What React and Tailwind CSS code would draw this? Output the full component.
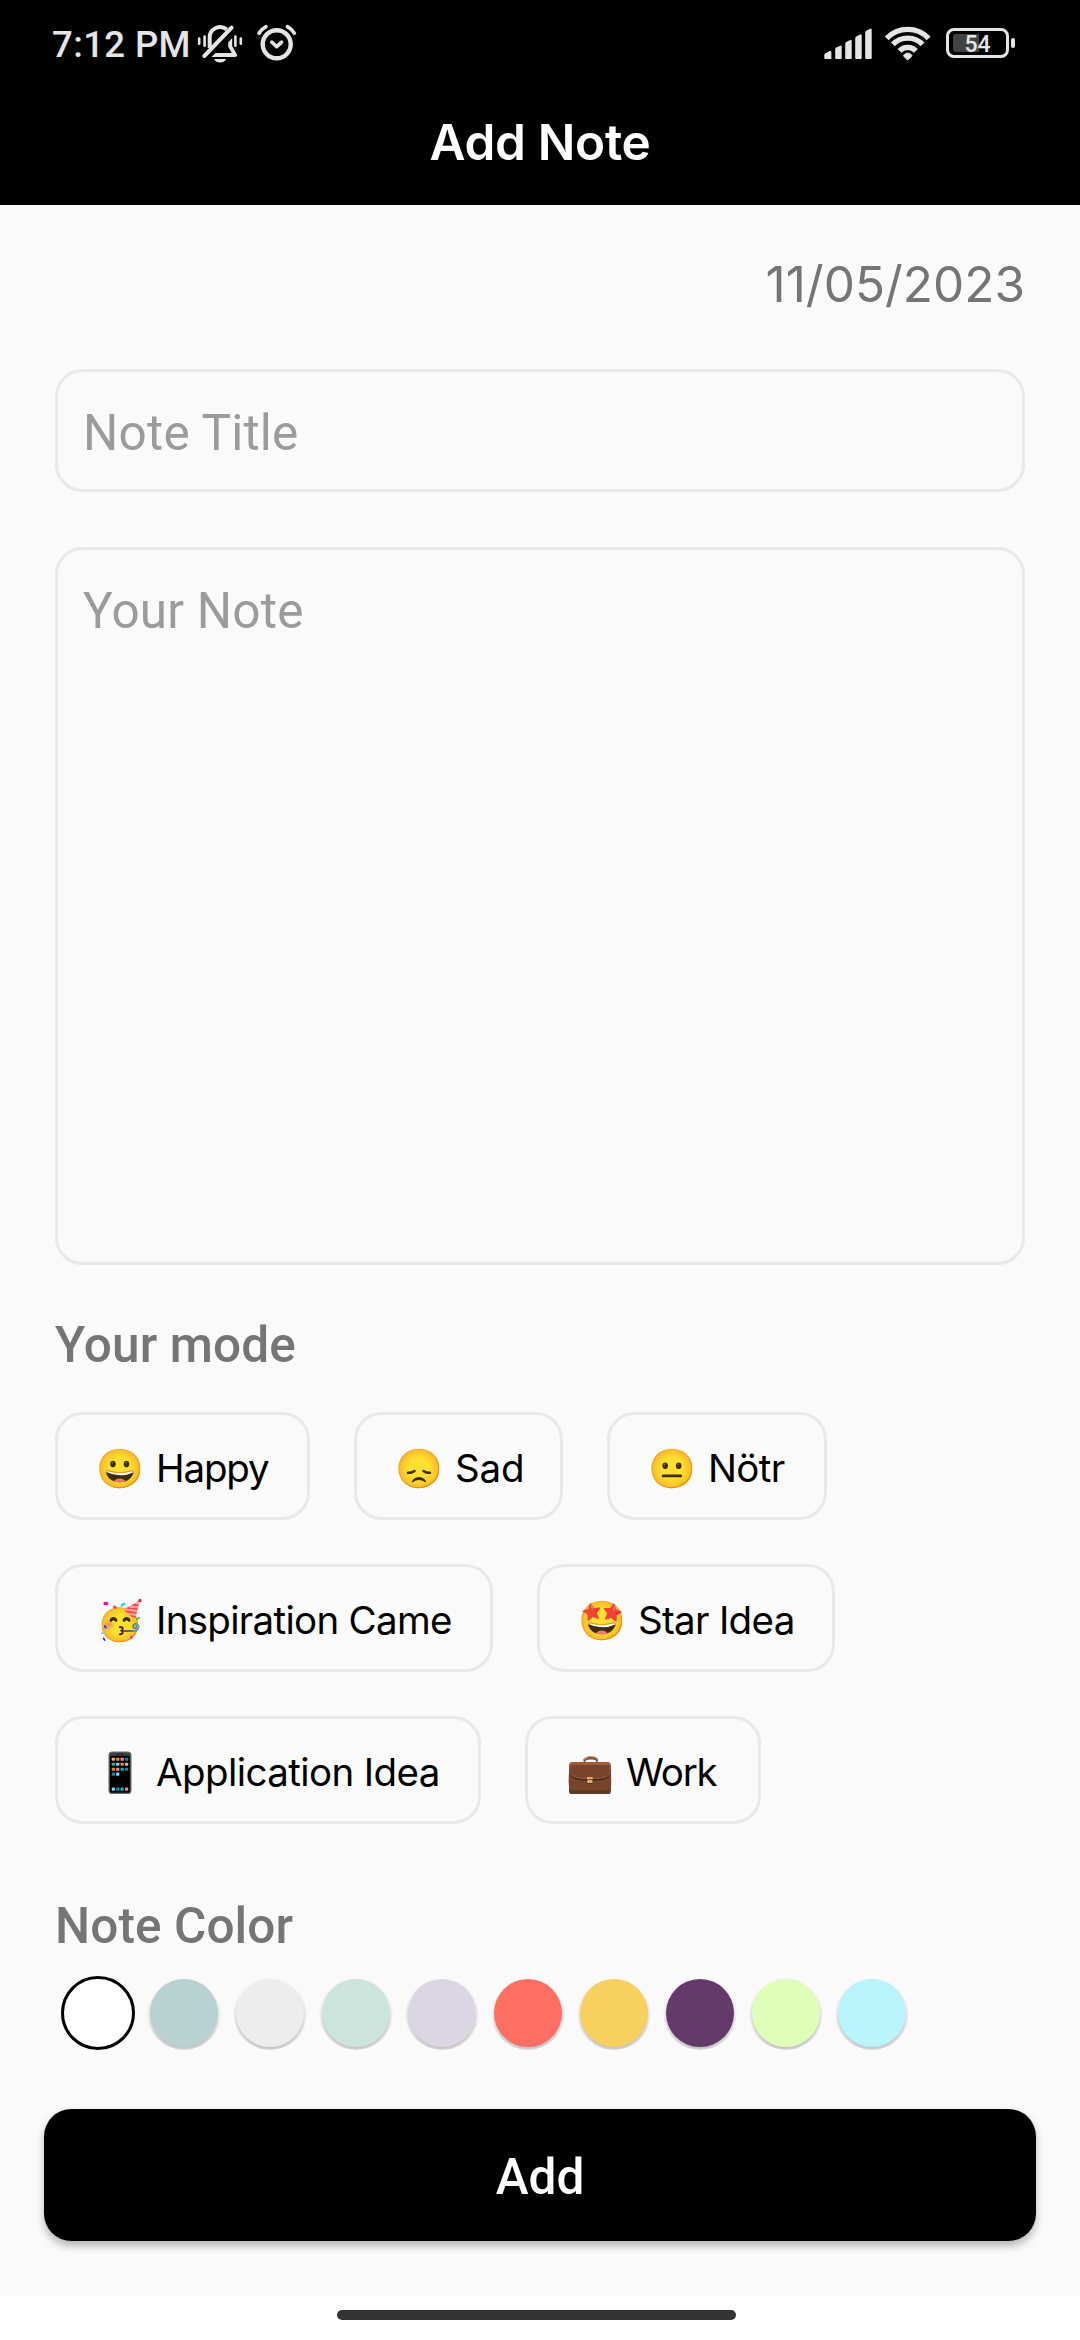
const moodRows = [
  [
    { emoji: "😀", label: "Happy", box: "w-[255px]", track: "tracking-[-1.17px]" },
    { emoji: "😞", label: "Sad", box: "w-[209px]", track: "tracking-[-0.14px]" },
    { emoji: "😐", label: "Nötr", box: "w-[220px]", track: "tracking-[-0.67px]" },
  ],
  [
    { emoji: "🥳", label: "Inspiration Came", box: "w-[438px]", track: "tracking-[-0.7px]" },
    { emoji: "🤩", label: "Star Idea", box: "w-[298px]", track: "tracking-[-0.69px]" },
  ],
  [
    { emoji: "📱", label: "Application Idea", box: "w-[426px]", track: "tracking-[-0.59px]" },
    { emoji: "💼", label: "Work", box: "w-[236px]", track: "tracking-[-1.2px]" },
  ],
];

const noteColors = [
  "bg-[#b8d2d2]",
  "bg-[#ededed]",
  "bg-[#cbe4dc]",
  "bg-[#dad7e2]",
  "bg-[#ff6e62]",
  "bg-[#f7d060]",
  "bg-[#643a6b]",
  "bg-[#dfffb9]",
  "bg-[#b9f3fc]",
];

function BellOffIcon() {
  return (
    <svg className="h-[88px] w-[48px]" viewBox="196 0 48 88" fill="none" stroke="#e5e5e5" strokeLinecap="round">
      <path d="M209.7 48V37.2a10.3 10.3 0 0 1 17-7.6" strokeWidth="4" strokeLinecap="butt" />
      <path d="M228.2 42.4L232.2 38V46.2L237 54.6Q237.6 57 235 57H211.5L215.5 53H231.8L228.2 46.8Z" fill="#e5e5e5" stroke="none" />
      <path d="M204.3 56L231.6 27.6" strokeWidth="4" />
      <path d="M214 59H226.2Q224.5 62.6 220.1 62.6T214 59Z" fill="#e5e5e5" stroke="none" />
      <path d="M199.2 38.6V43.8M204.6 36.6V45.8M235.4 36.6V45.8M240.8 38.6V43.8" strokeWidth="2.6" />
    </svg>
  );
}

function AlarmIcon() {
  return (
    <svg className="ml-[12px] h-[88px] w-[42px]" viewBox="256 0 42 88" fill="none" stroke="#e5e5e5" strokeLinecap="round" strokeLinejoin="round">
      <circle cx="276.7" cy="44.3" r="14" strokeWidth="4.4" />
      <path d="M271.8 42.2L276.7 46.6L281.6 42.2" strokeWidth="3.6" />
      <path d="M259 33.2Q261.6 29 266 26.6M287.4 26.6Q291.8 29 294.4 33.2" strokeWidth="3.6" />
    </svg>
  );
}

function SignalIcon() {
  return (
    <svg className="h-[88px] w-[56px]" viewBox="820 0 56 88" fill="#e5e5e5">
      <path d="M824.3 55.2Q824.3 54 825.4 53.3L829.8 51.1Q831.4 50.6 831.4 52.2V59H825.3Q824.3 59 824.3 58Z" />
      <path d="M835.2 49.3Q835.2 48.2 836.2 47.6L840.2 45.7Q841.7 45.3 841.7 46.8V58Q841.7 59 840.7 59H836.2Q835.2 59 835.2 58Z" />
      <path d="M845.2 43.7Q845.2 42.6 846.2 42L850.2 40Q851.7 39.6 851.7 41.1V58Q851.7 59 850.7 59H846.2Q845.2 59 845.2 58Z" />
      <path d="M855.2 38.1Q855.2 37 856.2 36.4L860.2 34.4Q861.7 34 861.7 35.5V58Q861.7 59 860.7 59H856.2Q855.2 59 855.2 58Z" />
      <path d="M865.2 32.5Q865.2 31.4 866.2 30.8L870.2 28.7Q871.7 28.3 871.7 29.8V58Q871.7 59 870.7 59H866.2Q865.2 59 865.2 58Z" />
    </svg>
  );
}

function WifiIcon() {
  return (
    <svg className="ml-[6px] h-[88px] w-[51px]" viewBox="882 0 51 88" fill="none" stroke="#e5e5e5" strokeWidth="5.4">
      <path d="M886.7 38.4A29 29 0 0 1 928.7 38.4" />
      <path d="M892.9 44.4A20.5 20.5 0 0 1 922.5 44.4" />
      <path d="M899.5 50.8A11.5 11.5 0 0 1 915.9 50.8" />
      <path d="M903.2 55.6Q905.3 53 907.7 53T912.2 55.6L908.7 59.4Q907.7 60.2 906.7 59.4Z" fill="#e5e5e5" stroke="#e5e5e5" strokeWidth="0.8" />
    </svg>
  );
}

function Battery() {
  return (
    <div className="ml-[13px] mt-[28px] flex items-center">
      <div className="relative flex h-[30px] w-[63px] justify-center rounded-[8px] border-[3px] border-[#e5e5e5]">
        <div className="absolute left-[4px] top-[3px] h-[18px] w-[26px] rounded-l-[3px] bg-[#424242]" />
        <span className="relative mt-[2px] text-[23px] font-medium leading-[24px] text-[#e5e5e5]">54</span>
      </div>
      <div className="ml-[2px] h-[10px] w-[4px] rounded-[2px] bg-[#e5e5e5]" />
    </div>
  );
}

function MoodChip({ emoji, label, box, track }) {
  return (
    <button className={`flex h-[108px] items-baseline whitespace-nowrap rounded-[27.5px] border-[3px] border-[#e9e9e9] pl-[38px] pt-[32px] text-[38.5px] leading-[42px] text-black ${box}`}>
      <span className="w-[48px] shrink-0 text-left font-['Noto_Color_Emoji']">{emoji}</span>
      <span className={`ml-[12px] font-['Inter',sans-serif] ${track}`}>{label}</span>
    </button>
  );
}

export default function App() {
  return (
    <div className="flex h-[2340px] w-[1080px] flex-col bg-white font-['Roboto',sans-serif]">
      <header className="h-[205px] bg-black">
        <div className="flex h-[88px] items-start pl-[52px] pr-[65px]">
          <span className="mt-[23px] w-[144px] whitespace-nowrap text-[36.5px] font-medium leading-[44px] tracking-[0.4px] text-[#e5e5e5]">7:12 PM</span>
          <BellOffIcon />
          <AlarmIcon />
          <div className="ml-auto flex items-start">
            <SignalIcon />
            <WifiIcon />
            <Battery />
          </div>
        </div>
        <h1 className="pt-[24px] text-center font-['Inter',sans-serif] text-[49.5px] font-semibold leading-[60px] tracking-[-0.3px] text-white">Add Note</h1>
      </header>

      <main className="flex h-[2091px] flex-col bg-[#fafafa] px-[55px] pt-[49px]">
        <div className="text-right font-['Inter',sans-serif] text-[49.5px] leading-[60px] text-[#757575]">11/05/2023</div>

        <div className="mt-[55px] h-[123px] rounded-[27.5px] border-[3px] border-[#e9e9e9] pl-[25px] pt-[31px] text-[49.5px] leading-[60px] tracking-[0.22px] text-[#9b9b9b]">Note Title</div>
        <div className="mt-[55px] h-[718px] rounded-[27.5px] border-[3px] border-[#e9e9e9] pl-[25px] pt-[31px] text-[49.5px] leading-[60px] tracking-[0.22px] text-[#9b9b9b]">Your Note</div>

        <h2 className="mt-[50px] text-[49.5px] font-medium leading-[60px] tracking-[0.12px] text-[#757575]">Your mode</h2>
        <div className="mt-[37px] flex flex-col gap-[44px]">
          {moodRows.map((row) => (
            <div key={row[0].label} className="flex gap-[44px]">
              {row.map((mood) => (
                <MoodChip key={mood.label} {...mood} />
              ))}
            </div>
          ))}
        </div>

        <h2 className="mt-[72px] text-[49.5px] font-medium leading-[60px] tracking-[0.1px] text-[#757575]">Note Color</h2>
        <div className="ml-[6px] mt-[20px] flex gap-[12px]">
          <div className="size-[74px] rounded-full border-[3px] border-black bg-white" />
          {noteColors.map((color) => (
            <div key={color} className="size-[74px] overflow-hidden rounded-full p-[3px]">
              <div className={`size-[68px] rounded-full shadow-[0_3px_4px_rgba(0,0,0,0.25)] ${color}`} />
            </div>
          ))}
        </div>

        <button className="mx-[-11px] mt-[59px] flex h-[132px] justify-center rounded-[27.5px] bg-black pt-[38px] text-[49.5px] font-medium leading-[60px] text-white shadow-[0_5px_8px_rgba(0,0,0,0.28)]">Add</button>
      </main>

      <footer className="pl-[337px] pt-[14px]">
        <div className="h-[10px] w-[399px] rounded-full bg-[#333333]" />
      </footer>
    </div>
  );
}
